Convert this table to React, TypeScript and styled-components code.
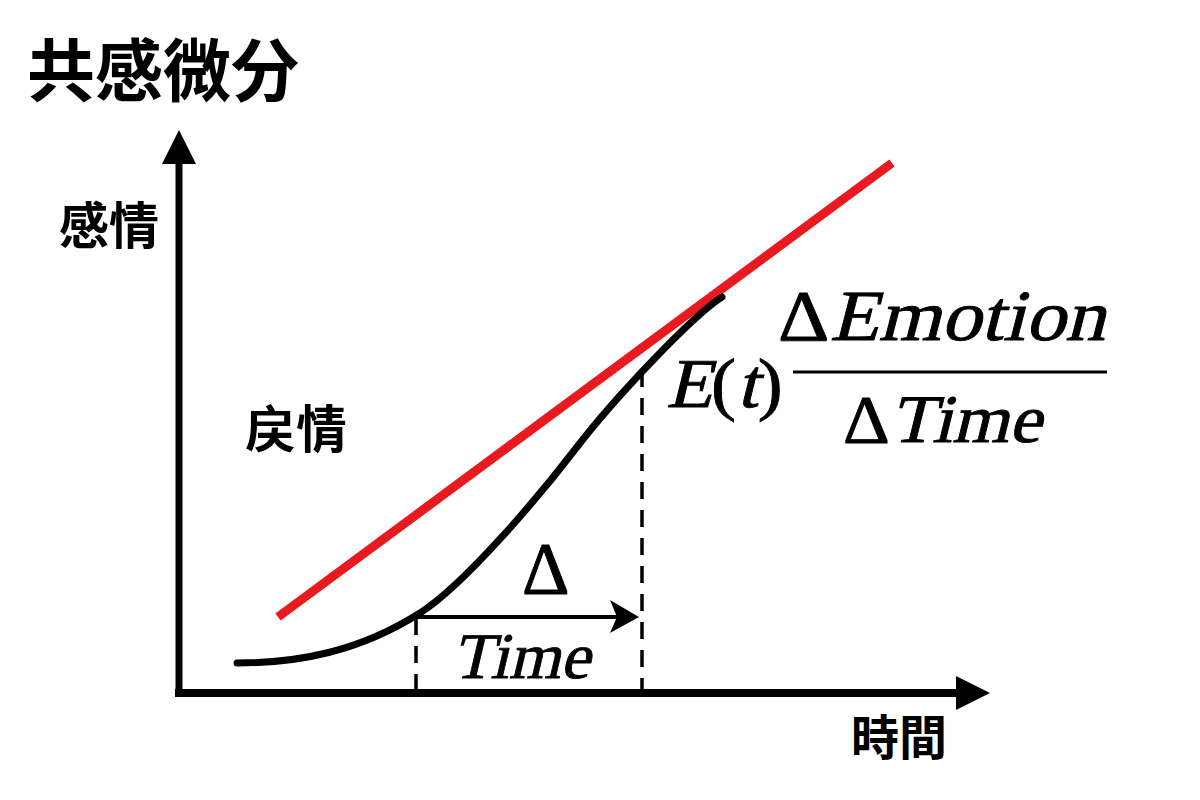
import React from "react";
import styled, { createGlobalStyle } from "styled-components";

const GlobalStyle = createGlobalStyle`
  html, body { margin: 0; padding: 0; background: #ffffff; }
  #root { width: 1200px; height: 800px; }
`;

const Page = styled.div`
  width: 1200px;
  height: 800px;
  display: flex;
  flex-direction: column;
  background: #ffffff;
  overflow: hidden;
`;

const Title = styled.h1`
  margin: 0;
  padding: 33px 0 0 27px;
  height: 68px;
  font-family: "Noto Sans CJK JP", "Noto Sans CJK SC", sans-serif;
  font-weight: 700;
  font-size: 68px;
  line-height: 68px;
  color: #000;
`;

const Canvas = styled.div`
  position: relative;
  flex: 1;
  width: 1200px;
`;

const Chart = styled.svg`
  display: block;
  width: 1200px;
  height: 100%;
`;

const Stroke = styled.path<{ $color?: string; $width: number; $dash?: string; $cap?: string }>`
  fill: none;
  stroke: ${(p) => p.$color || "#000"};
  stroke-width: ${(p) => p.$width}px;
  stroke-linecap: ${(p) => p.$cap || "butt"};
  stroke-linejoin: round;
  stroke-dasharray: ${(p) => p.$dash || "none"};
`;

const Head = styled.path`
  fill: #000;
  stroke: none;
`;

const CjkLabel = styled.text<{ $size: number; $family?: string }>`
  font-family: ${(p) => p.$family || `"Noto Sans CJK JP"`}, "Noto Sans CJK SC", sans-serif;
  font-weight: 700;
  font-size: ${(p) => p.$size}px;
  fill: #000;
`;

const BASE = 40;
const ASC = 0.8375 * BASE;

/* math labels placed on the diagram canvas: serif face, slanted for math italic */
const MathLabel = styled.div<{ $x: number; $y: number; $size: number; $stretch: number }>`
  position: absolute;
  left: ${(p) => p.$x}px;
  top: ${(p) => p.$y}px;
  font-family: "Liberation Serif", "Times New Roman", serif;
  font-style: normal;
  font-weight: 400;
  font-size: ${BASE}px;
  line-height: ${BASE}px;
  white-space: nowrap;
  color: #000;
  -webkit-text-stroke: 0.5px #000;
  transform-origin: 0 ${ASC}px;
  transform: scale(
      ${(p) => (p.$size / BASE) * p.$stretch},
      ${(p) => p.$size / BASE}
    )
    skewX(-13deg);
`;

const Upright = styled.span`
  display: inline-block;
  transform: skewX(13deg);
  transform-origin: 50% 84%;
`;

const CURVE =
  "M237 663 C300 663 360 651 420 613 C465 584.5 541 494 577 447 C613 400 692 316 722 297";

const TOP = 101;
const topFor = (baseline: number) => baseline - ASC - TOP;

export default function App() {
  return (
    <>
      <GlobalStyle />
      <Page>
        <Title>共感微分</Title>
        <Canvas>
          <Chart viewBox={`0 ${TOP} 1200 ${800 - TOP}`}>
            {/* axes */}
            <Stroke d="M179 697 L179 160" $width={7} />
            <Head d="M179 130 L162 164 L196 164 Z" />
            <Stroke d="M175 693 L960 693" $width={8} />
            <Head d="M990 693 L956 676 L956 710 Z" />

            {/* tangent */}
            <Stroke d="M278 617 L892 163" $width={9} $color="#e8191f" />

            {/* emotion curve */}
            <Stroke d={CURVE} $width={7} $cap="round" />

            {/* guides */}
            <Stroke d="M416 618 L416 693" $width={3.5} $dash="17 11" />
            <Stroke d="M642 370 L642 693" $width={3.5} $dash="17 11" />

            {/* delta time arrow */}
            <Stroke d="M416 617 L622 617" $width={4} />
            <Head d="M639 617 L610 600 L617 617 L610 633 Z" />

            {/* fraction bar */}
            <Stroke d="M793 372 L1107 372" $width={3} />

            {/* axis labels */}
            <CjkLabel x={59} y={244} $size={50}>感情</CjkLabel>
            <CjkLabel x={245} y={448} $size={51} $family={`"Noto Sans CJK TC"`}>戻情</CjkLabel>
            <CjkLabel x={851} y={755} $size={48}>時間</CjkLabel>
          </Chart>

          <MathLabel $x={522} $y={topFor(594)} $size={74} $stretch={1}>
            <Upright>Δ</Upright>
          </MathLabel>
          <MathLabel $x={452} $y={topFor(678)} $size={65} $stretch={1.02}>
            Time
          </MathLabel>
          <MathLabel $x={666} $y={topFor(407)} $size={70} $stretch={1.07}>
            E<Upright>(</Upright>t<Upright>)</Upright>
          </MathLabel>
          <MathLabel $x={778} $y={topFor(340)} $size={72} $stretch={1.11}>
            <Upright>Δ</Upright>Emotion
          </MathLabel>
          <MathLabel $x={843} $y={topFor(442)} $size={68} $stretch={1.07}>
            <Upright>Δ</Upright>Time
          </MathLabel>
        </Canvas>
      </Page>
    </>
  );
}
